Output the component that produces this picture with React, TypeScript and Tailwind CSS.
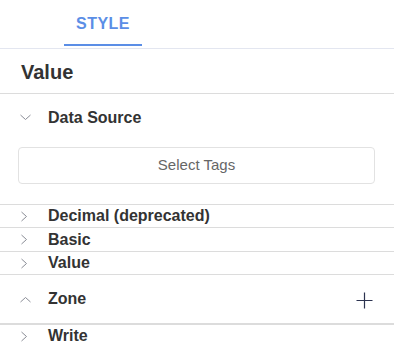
import React from "react";

const ChevronRight = () => (
  <svg width="8" height="11" viewBox="0 0 8 11" className="shrink-0">
    <path d="M1.5 1 L6.5 5.5 L1.5 10" fill="none" stroke="#8a8d96" strokeWidth="1" />
  </svg>
);
const ChevronDown = () => (
  <svg width="11" height="7" viewBox="0 0 11 7" className="shrink-0">
    <path d="M0.5 1 L5.5 5.5 L10.5 1" fill="none" stroke="#8a8d96" strokeWidth="1" />
  </svg>
);
const ChevronUp = () => (
  <svg width="11" height="7" viewBox="0 0 11 7" className="shrink-0">
    <path d="M0.5 6 L5.5 1.5 L10.5 6" fill="none" stroke="#8a8d96" strokeWidth="1" />
  </svg>
);

const Row = ({ label, tall }: { label: string; tall?: boolean }) => (
  <div className={`flex items-center border-b border-[#dcdcdc] ${tall ? "h-[24px]" : "h-[23px]"}`}>
    <div className="flex w-[48px] justify-start pl-[20px]">
      <ChevronRight />
    </div>
    <span className="text-[16px] font-bold text-[#333]">{label}</span>
  </div>
);

export default function App() {
  return (
    <div
      className="h-[347px] w-[394px] overflow-hidden bg-white"
      style={{ fontFamily: '"Liberation Sans", Arial, sans-serif' }}
    >
      <div className="flex h-[49px] border-b border-[#e3e6f0]">
        <div className="ml-[64px] flex w-[78px] flex-col">
          <div className="flex h-[44px] items-center justify-center pt-[4px] text-[16px] font-bold tracking-[0.5px] text-[#5b8ee6]">
            STYLE
          </div>
          <div className="h-[2px] bg-[#5b8ee6]" />
        </div>
      </div>
      <div className="flex h-[45px] items-center border-b border-[#dcdcdc] pl-[21px] pt-[1px] text-[20px] font-bold text-[#333]">
        Value
      </div>
      <div className="h-[111px] border-b border-[#dcdcdc]">
        <div className="flex h-[46px] items-center pt-[1px]">
          <div className="flex w-[48px] pl-[20px]">
            <ChevronDown />
          </div>
          <span className="text-[16px] font-bold text-[#333]">Data Source</span>
        </div>
        <div className="mx-[18px] mt-[7px] flex h-[37px] w-[357px] items-center justify-center rounded-[4px] border border-[#e2e2e2] text-[15px] text-[#666]">
          Select Tags
        </div>
      </div>
      <Row label="Decimal (deprecated)" />
      <Row label="Basic" tall />
      <Row label="Value" />
      <div className="flex h-[50px] items-center border-b-2 border-[#dcdcdc] pr-[21px]">
        <div className="flex w-[48px] pl-[20px]">
          <ChevronUp />
        </div>
        <span className="flex-1 text-[16px] font-bold text-[#333]">Zone</span>
        <svg width="17" height="17" viewBox="0 0 17 17" className="mt-[2px]">
          <path d="M8.5 0.5 V16.5 M0.5 8.5 H16.5" stroke="#2c3350" strokeWidth="1.2" fill="none" />
        </svg>
      </div>
      <Row label="Write" />
    </div>
  );
}
